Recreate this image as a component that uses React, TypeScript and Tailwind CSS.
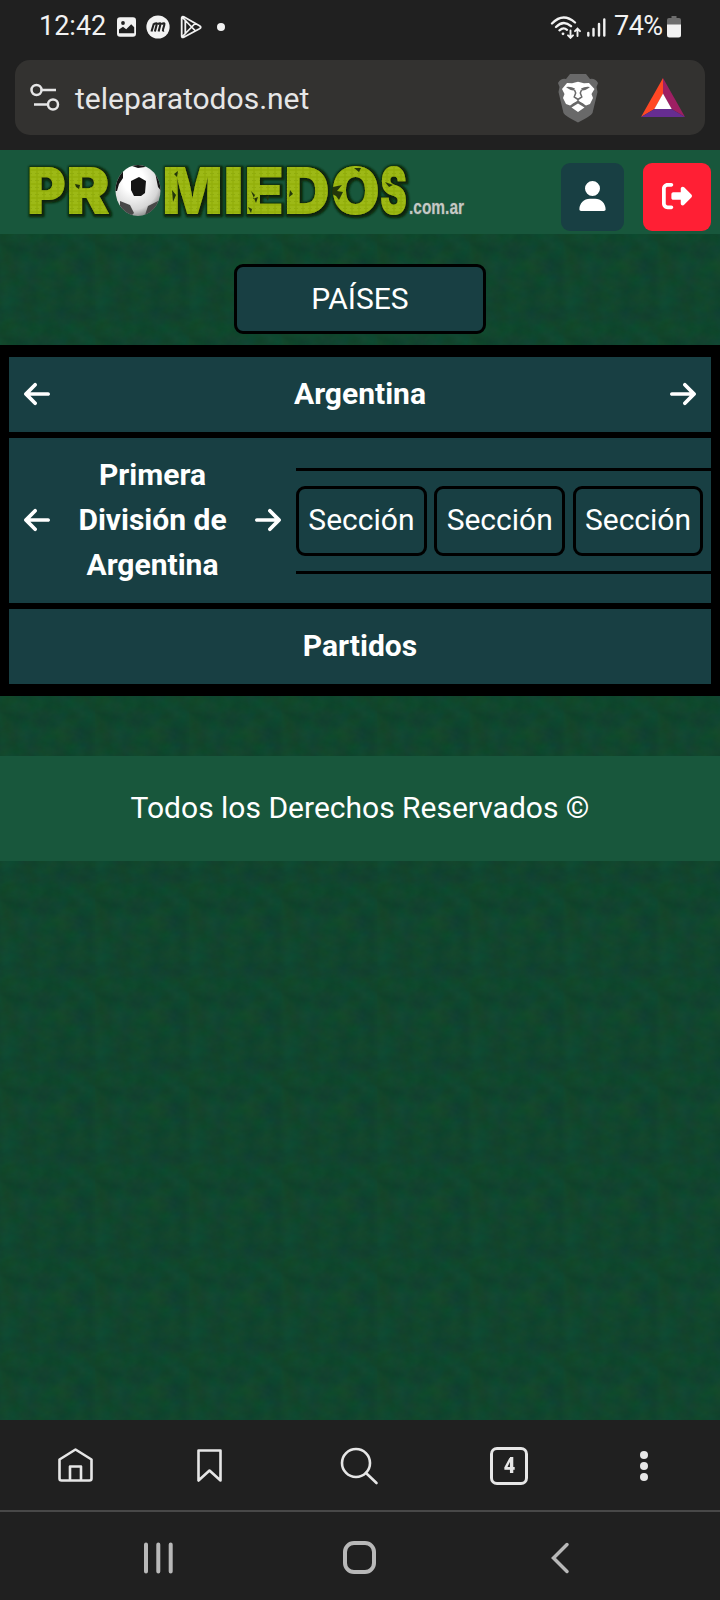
import { FaArrowLeft, FaArrowRight, FaRightFromBracket, FaUser } from "react-icons/fa6";

function StatusBar() {
  return (
    <div className="flex h-[60px] items-start justify-between pl-[39px] pr-[38px] text-[#f2f2f2]">
      <div className="flex h-[53px] items-center">
        <span className="w-[66px] whitespace-nowrap text-[27px] leading-none">12:42</span>
        <svg className="ml-[12px] h-[20px] w-[19px]" viewBox="0 0 19 20">
          <rect width="19" height="19.5" y=".2" rx="3" fill="#f2f2f2" />
          <path d="M2 16.300v-3.800l4-2.800 3.200 2.600 5-5 3 3v6z" fill="#202020" />
          <circle cx="6" cy="6" r="1.900" fill="#202020" />
        </svg>
        <svg className="ml-[10px] h-[24px] w-[24px]" viewBox="0 0 24 24">
          <circle cx="12" cy="12" r="11.600" fill="#f2f2f2" />
          <path d="m5.500 16.500 2.400-8M8 9q3.300-1.800 2.700.5l-1.800 7M11.700 9q3.300-1.800 2.700.5l-1.800 7M15.500 9q3.700-1.800 2.800 1l-1.300 4.500q-.5 1.500 1 1" fill="none" stroke="#202020" strokeWidth="2.100" />
        </svg>
        <svg className="ml-[9px] h-[24px] w-[24px]" viewBox="0 0 24 24" fill="none" stroke="#f2f2f2" strokeWidth="1.800" strokeLinejoin="round">
          <path d="M2.700 3v18.200q.2 1.800 2 1L20.500 13.800q2.500-1.500 0-3L4.700 1.800Q3 1 2.700 3ZM3.500 2.500 16.500 16M3.500 21.500 16.500 8M6.300 5.500v13" />
        </svg>
        <span className="ml-[14px] h-[8px] w-[8px] rounded-full bg-[#f2f2f2]" />
      </div>
      <div className="flex h-[53px] items-center">
        <svg className="mr-[1px] h-[24px] w-[32px]" viewBox="0 0 32 24" fill="none" stroke="#f2f2f2" strokeWidth="2.300" strokeLinecap="round">
          <path d="M2 8.500Q13 -3 25 7.500M6 12q7.500-7.500 15-.8M9.500 15.300q4-3.500 7.500-.5" />
          <circle cx="13" cy="18.800" r="1.400" fill="#f2f2f2" stroke="none" />
          <path d="M20.500 15.500v7M18 20.300l2.500 2.500 2.500-2.500M27.500 21v-7M25 16.200l2.500-2.500 2.500 2.500" strokeWidth="1.900" />
        </svg>
        <svg className="ml-[3px] h-[20px] w-[20px]" viewBox="0 0 20 20" stroke="#f2f2f2" strokeWidth="2.400" strokeLinecap="round">
          <path d="M2.300 16v2.500M7.500 12v6.500M13 7v11.500M18.300 2.500v16" />
        </svg>
        <span className="ml-[8px] w-[53px] whitespace-nowrap text-[27px] leading-none tracking-[-0.500px]">74%</span>
        <svg className="mr-[1px] h-[22px] w-[14px]" viewBox="0 0 14 22">
          <path d="M4.500 0h5v2H12q2 0 2 2v5H0V4q0-2 2-2h2.500z" fill="#6d6d6d" />
          <path d="M0 8.500h14V19q0 2.500-2.500 2.500h-9Q0 21.500 0 19z" fill="#f2f2f2" />
        </svg>
      </div>
    </div>
  );
}

function AddressBar() {
  return (
    <div className="h-[90px] px-[15px]">
      <div className="flex h-[75px] items-center rounded-[15px] bg-[#333230]">
        <svg className="ml-[15px] mt-[-1px] h-[30px] w-[30px]" viewBox="0 0 30 30" fill="none" stroke="#e6e6e6" strokeWidth="2.500">
          <circle cx="6.500" cy="8" r="5" />
          <circle cx="23" cy="22.500" r="5" />
          <path d="M11.500 8H26M4 22.500h14" />
        </svg>
        <span className="ml-[15px] grow pt-[2px] text-[30px] leading-none text-[#e6e6e6]">teleparatodos.net</span>
        <svg className="h-[50px] w-[42px]" viewBox="0 0 42 50">
          <path d="M13 1h16l4 5q5-1 8 4l-1.500 4 1 5-5 21q-1.500 3-14.500 9.500Q8 43 6.500 40l-5-21 1-5L1 10q3-5 8-4z" fill="#696969" />
          <path d="m5 16 5-6 5 .3 6-1.500 6 1.500 5-.3 5.500 6-3 5 1.500 4-3 6-4 1.500-8-4.500-8 4.500-4-1.500-3-6 1.500-4zM14.500 34.500l6.500-4 6.500 4L21 39z" fill="#fff" />
          <path d="M9 14q5-.7 9 1.500l-1 2q-3 .3-6-2zM33 14q-5-.7-9 1.500l1 2q3 .3 6-2z" fill="#696969" />
          <path d="m17.500 17 1.200 3-1.500 4 3.800 2.500 3.800-2.500-1.500-4 1.200-3M21 26v2.500l-6 3.500M21 28.500l6 3.500" fill="none" stroke="#696969" strokeWidth="1.500" />
        </svg>
        <svg className="ml-[42px] mr-[20px] h-[40px] w-[44px]" viewBox="0 0 44 40">
          <path d="M22 0v16L13.500 31 0 39z" fill="#ff4724" />
          <path d="m22 0 22 39-13.500-8L22 16z" fill="#9e1f63" />
          <path d="m0 39 13.500-8h17L44 39z" fill="#662d91" />
          <path d="m22 15.500 8.700 15.500H13.300z" fill="#fff" />
        </svg>
      </div>
    </div>
  );
}

const letters = [
  { c: "P", x: 27, w: 39 },
  { c: "R", x: 66, w: 44 },
  { c: "M", x: 162, w: 61 },
  { c: "I", x: 223, w: 21 },
  { c: "E", x: 244, w: 40 },
  { c: "D", x: 284, w: 46 },
  { c: "O", x: 331, w: 49 },
  { c: "S", x: 380, w: 27 },
];

function Logo() {
  return (
    <svg className="h-[84px] w-[470px]" viewBox="0 150 470 84" role="img">
      <defs>
        <pattern id="fabric" width="7" height="7" patternUnits="userSpaceOnUse">
          <rect width="7" height="7" fill="#9db912" />
          <path d="M0 2h7M0 5.500h4M2 0v7" stroke="#90ac10" />
        </pattern>
        <radialGradient id="ball" cx=".4" cy=".3" r=".75">
          <stop offset=".3" stopColor="#fff" />
          <stop offset=".75" stopColor="#d6d6d6" />
          <stop offset="1" stopColor="#777" />
        </radialGradient>
        <filter id="glow" x="-5%" y="-20%" width="110%" height="140%">
          <feMorphology in="SourceAlpha" operator="dilate" radius="1.800" result="fat" />
          <feGaussianBlur in="fat" stdDeviation="1" result="soft" />
          <feOffset in="soft" dx=".7" dy="1.300" result="moved" />
          <feFlood floodColor="#0a2208" />
          <feComposite in2="moved" operator="in" result="shade" />
          <feMerge>
            <feMergeNode in="shade" />
            <feMergeNode in="SourceGraphic" />
          </feMerge>
        </filter>
        <clipPath id="ballClip"><ellipse cx="138" cy="190.500" rx="22.500" ry="25.500" /></clipPath>
      </defs>
      <g filter="url(#glow)" fontFamily="Inter" fontWeight="900" fontSize="64" fill="url(#fabric)">
        {letters.map((l) => (
          <text key={l.c} x={l.x} y="213.500" textLength={l.w} lengthAdjust="spacingAndGlyphs">{l.c}</text>
        ))}
      </g>
      <g clipPath="url(#ballClip)">
        <rect x="115" y="164" width="46" height="53" fill="url(#ball)" />
        <path d="m131 181 8-4 7 4-1 12-4 3h-7l-3-6zM129 163h18l-2 4-7 1-6-2zM114 180l4-8 5-2v8l-4 6-2 7h-3zM155 172l7 2v18l-4-5z" fill="#151515" />
        <path d="m120 201 10 4 4 8-5 5-9-9zM148 206l10-5-1 8-8 8-4-2z" fill="#484848" />
      </g>
      <path d="m174 174 4-3-1 6zM172 190l4 5-3 7zM251 191l4 4-2 4 5-2-2 6zM248 207l4 2-1 4zM333 187l9-2-5 6 6 1-4 8-3-4-4-2zM354 168l5 4 2-4zM385 182l8 3-4 2zM290 190l3 4-4 3zM266 197l3-2-1 6zM75 184l5 1-1 4-3-2z" fill="#23360b" />
      <text x="409" y="214" fontFamily="Liberation Sans Narrow, Liberation Sans" fontWeight="700" fontSize="20" textLength="55" lengthAdjust="spacingAndGlyphs" fill="#c3cac5" stroke="#4a6355" strokeWidth="1" paintOrder="stroke">.com.ar</text>
    </svg>
  );
}

function Texture() {
  return (
    <svg className="absolute inset-0 h-full w-full" aria-hidden="true">
      <defs>
        <filter id="grain" x="0" y="0" width="100%" height="100%" colorInterpolationFilters="sRGB">
          <feTurbulence type="fractalNoise" baseFrequency=".053 .064" numOctaves="5" seed="3" stitchTiles="stitch" />
          <feColorMatrix values=".06 0 0 0 .035  0 .06 0 0 .242  0 0 .065 0 .147  0 0 0 0 1" />
        </filter>
        <pattern id="felt" width="94" height="93.750" patternUnits="userSpaceOnUse">
          <rect width="94" height="93.750" filter="url(#grain)" />
        </pattern>
      </defs>
      <rect width="100%" height="100%" fill="url(#felt)" />
    </svg>
  );
}

function Site() {
  return (
    <div className="relative h-[1270px] bg-[#10462e] text-[30px] leading-[45px] text-white">
      <Texture />
      <div className="relative flex h-full flex-col">
        <header className="flex h-[84px] bg-[#18573c]">
          <Logo />
          <button className="ml-[91px] mt-[13px] flex h-[68px] w-[63px] items-center justify-center rounded-[9px] bg-[#183f43]">
            <FaUser className="mt-[-2px] h-[30px] w-[27px]" />
          </button>
          <button className="ml-[19px] mt-[13px] flex h-[68px] w-[68px] items-center justify-center rounded-[9px] bg-[#ff1f34]">
            <FaRightFromBracket className="mt-[-2px] h-[30px] w-[30px]" />
          </button>
        </header>
        <button className="mt-[30px] h-[70px] w-[252px] self-center rounded-[9px] border-[3px] border-black bg-[#183f43] pb-[2px]">PAÍSES</button>
        <main className="mt-[11px] flex h-[351px] flex-col gap-[6px] bg-black px-[9px] py-[12px] font-bold">
          <div className="flex h-[75px] items-center justify-between bg-[#183f43] px-[15px] pb-[2px]">
            <FaArrowLeft className="h-[30px] w-[26px]" />
            <span>Argentina</span>
            <FaArrowRight className="h-[30px] w-[26px]" />
          </div>
          <div className="flex h-[165px] items-center bg-[#183f43] pl-[15px]">
            <FaArrowLeft className="mb-[2px] h-[30px] w-[26px] shrink-0" />
            <span className="w-[205px] shrink-0 px-[20px] pb-[2px] text-center">Primera División de Argentina</span>
            <FaArrowRight className="mb-[2px] h-[30px] w-[26px] shrink-0" />
            <div className="ml-[15px] flex h-[106px] w-[415px] items-center gap-[7.500px] border-y-[3px] border-black font-normal">
              {[0, 1, 2].map((i) => (
                <button key={i} className="h-[70px] w-[130.800px] shrink-0 rounded-[9px] border-[3px] border-black pb-[2px]">Sección</button>
              ))}
            </div>
          </div>
          <div className="flex h-[75px] items-center justify-center bg-[#183f43] pb-[2px]">Partidos</div>
        </main>
        <footer className="mt-[60px] flex h-[105px] items-center justify-center bg-[#18573c] pb-[2px]">Todos los Derechos Reservados ©</footer>
      </div>
    </div>
  );
}

function BrowserBar() {
  return (
    <nav className="flex h-[92px] items-center border-b-2 border-[#484848] pl-[56px] text-[#e6e6e6]">
      <svg className="h-[38px] w-[38px]" viewBox="0 0 38 38" fill="none" stroke="currentColor" strokeWidth="2.600" strokeLinejoin="round">
        <path d="M3.500 13.500 19.500 3.500l16 10v19q0 2-2 2h-28q-2 0-2-2zM14 34V20.500h11V34" />
      </svg>
      <svg className="ml-[101px] h-[38px] w-[28px]" viewBox="0 0 28 38" fill="none" stroke="currentColor" strokeWidth="2.600" strokeLinejoin="round">
        <path d="M3.500 4.500h22v30l-11-10-11 10z" />
      </svg>
      <svg className="ml-[116px] h-[40px] w-[40px]" viewBox="0 0 40 40" fill="none" stroke="currentColor" strokeWidth="2.600" strokeLinecap="round">
        <circle cx="17" cy="18" r="14" />
        <path d="m27 28 10.500 10" />
      </svg>
      <span className="ml-[111px] mt-[1px] flex h-[38px] w-[38px] items-center justify-center rounded-[7px] border-[3px] border-current text-[22px] font-bold leading-none"><b className="scale-x-90">4</b></span>
      <span className="ml-[112px] mt-[1px] flex flex-col gap-[3px]">
        <i className="h-[8px] w-[8px] rounded-full bg-current" />
        <i className="h-[8px] w-[8px] rounded-full bg-current" />
        <i className="h-[8px] w-[8px] rounded-full bg-current" />
      </span>
    </nav>
  );
}

function SystemBar() {
  return (
    <nav className="flex h-[88px] items-center pl-[143px] pt-[3px]">
      <svg className="h-[34px] w-[30px]" viewBox="0 0 30 34" stroke="#b8b8b8" strokeWidth="4" strokeLinecap="round">
        <path d="M3 3.500v27M15.300 3.500v27M27.700 3.500v27" />
      </svg>
      <span className="ml-[170px] h-[33px] w-[33px] rounded-[11px] border-4 border-[#b8b8b8]" />
      <svg className="ml-[174px] h-[34px] w-[20px]" viewBox="0 0 20 34" fill="none" stroke="#b8b8b8" strokeWidth="3.500" strokeLinecap="round">
        <path d="M17 3.500 3.500 17 17 30.500" />
      </svg>
    </nav>
  );
}

export default function App() {
  return (
    <div className="h-[1600px] w-[720px] overflow-hidden bg-[#202020] font-['Roboto',sans-serif]">
      <StatusBar />
      <AddressBar />
      <Site />
      <BrowserBar />
      <SystemBar />
    </div>
  );
}
